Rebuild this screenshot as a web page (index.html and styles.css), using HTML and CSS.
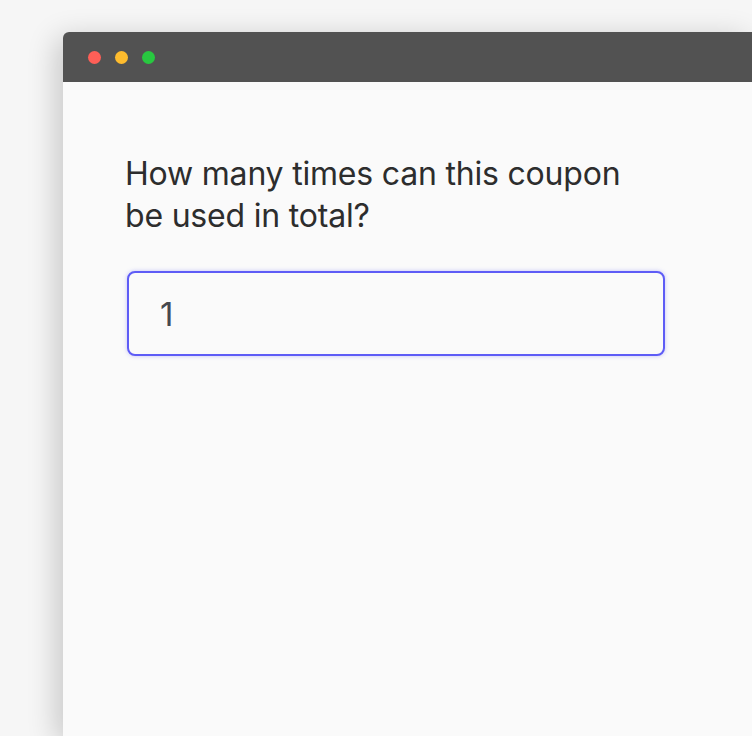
FILE: index.html
```html
<!DOCTYPE html>
<html lang="en">
<head>
    <meta charset="UTF-8">
    <meta name="viewport" content="width=device-width, initial-scale=1.0">
    <title>Coupon usage</title>
    <link rel="stylesheet" href="styles.css">
</head>
<body>
    <div class="window">
        <div class="titlebar">
            <span class="dot red"></span>
            <span class="dot yellow"></span>
            <span class="dot green"></span>
        </div>
        <div class="content">
            <label for="uses" class="question">How many times can this coupon be used in total?</label>
            <input type="text" id="uses" class="field" value="1">
        </div>
    </div>
</body>
</html>
```

FILE: styles.css
```css
html, body {
    height: 100%;
}
body {
    font-family: Inter, 'Helvetica Neue', Arial, sans-serif;
    margin: 0;
    padding: 32px 0 0 63px;
    box-sizing: border-box;
    background-color: #f6f6f6;
    overflow: hidden;
}
.window {
    height: 100%;
    background: #fafafa;
    border-radius: 6px 0 0 0;
    box-shadow: -6px 6px 30px rgba(0, 0, 0, 0.2);
    overflow: hidden;
}
.titlebar {
    height: 50px;
    background: #525252;
    display: flex;
    align-items: center;
    gap: 14px;
    padding-left: 25px;
}
.dot {
    width: 13px;
    height: 13px;
    border-radius: 50%;
}
.red { background: #fe5f57; }
.yellow { background: #febc2e; }
.green { background: #28c840; }
.content {
    padding: 71px 0 0 62px;
}
.question {
    display: block;
    width: 520px;
    font-size: 32px;
    line-height: 42px;
    color: #2d2d2d;
    letter-spacing: -0.2px;
}
.field {
    display: block;
    box-sizing: border-box;
    width: 538px;
    height: 85px;
    margin: 34px 0 0 2px;
    padding: 0 0 0 31px;
    border: 2px solid #5e5cf6;
    border-radius: 8px;
    background: #fafafa;
    box-shadow: 0 0 4px rgba(94, 92, 246, 0.35);
    font-family: Inter, 'Helvetica Neue', Arial, sans-serif;
    font-size: 33px;
    color: #45484e;
    outline: none;
}
```
